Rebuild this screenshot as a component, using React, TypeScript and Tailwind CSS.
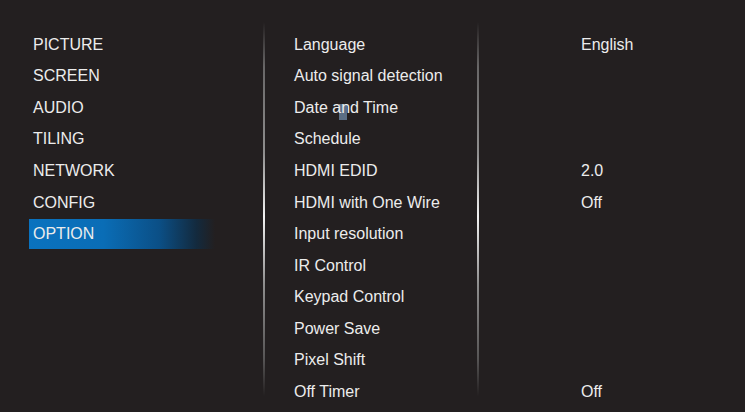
import React from "react";

const left = ["PICTURE", "SCREEN", "AUDIO", "TILING", "NETWORK", "CONFIG", "OPTION"];
const mid: [string, string][] = [
  ["Language", "English"],
  ["Auto signal detection", ""],
  ["Date and Time", ""],
  ["Schedule", ""],
  ["HDMI EDID", "2.0"],
  ["HDMI with One Wire", "Off"],
  ["Input resolution", ""],
  ["IR Control", ""],
  ["Keypad Control", ""],
  ["Power Save", ""],
  ["Pixel Shift", ""],
  ["Off Timer", "Off"],
];

function Divider() {
  return (
    <div className="w-[2px] shrink-0 mt-[22px] mb-[16px] bg-[linear-gradient(to_bottom,rgba(255,255,255,0)_0%,rgba(150,150,150,0.6)_12%,rgba(170,170,170,0.8)_35%,#f2f2f2_52%,rgba(170,170,170,0.8)_70%,rgba(130,130,130,0.55)_90%,rgba(255,255,255,0)_100%)]" />
  );
}

export default function App() {
  return (
    <div
      className="w-[745px] h-[412px] bg-[#231f20] flex text-[#ececec] text-[16px] overflow-hidden"
      style={{ fontFamily: '"Liberation Sans", Arial, sans-serif' }}
    >
      <div className="w-[263px] shrink-0 pt-[29px] pl-[29px]">
        {left.map((l) => (
          <div key={l} className="h-[31.55px] flex items-center">
            {l === "OPTION" ? (
              <div className="h-[30px] w-[186px] flex items-center pl-[4px] bg-[linear-gradient(to_right,#0a72bf_0%,#0a6db6_40%,#0b4f86_70%,#132a3e_90%,#231f20_100%)]">
                {l}
              </div>
            ) : (
              <div className="pl-[4px]">{l}</div>
            )}
          </div>
        ))}
      </div>
      <Divider />
      <div className="w-[212px] shrink-0 pt-[29px] pl-[29px]">
        {mid.map(([k]) => (
          <div key={k} className="relative h-[31.55px] flex items-center whitespace-nowrap">
            {k === "Date and Time" && (
              <span className="absolute left-[45px] top-[12px] w-[8px] h-[16px] bg-[#5b6e85]" />
            )}
            <span className="relative">{k}</span>
          </div>
        ))}
      </div>
      <Divider />
      <div className="flex-1 pt-[29px] pl-[102px]">
        {mid.map(([k, v]) => (
          <div key={k} className="h-[31.55px] flex items-center">
            {v}
          </div>
        ))}
      </div>
    </div>
  );
}
